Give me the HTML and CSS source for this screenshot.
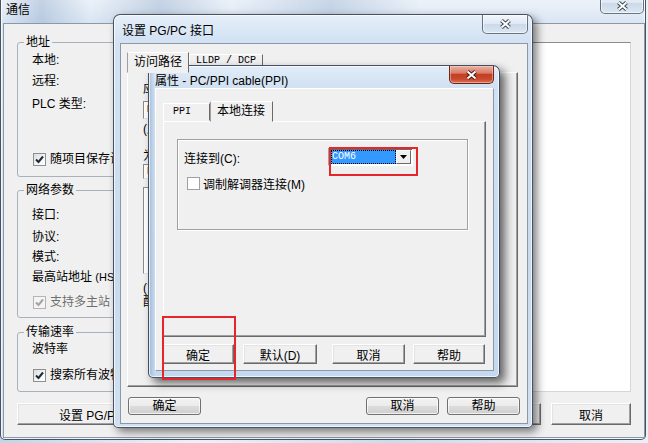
FILE: index.html
```html
<!DOCTYPE html>
<html>
<head lang="zh">
    <meta charset="UTF-8">
    <title>通信</title>
    <link rel="stylesheet" href="styles.css">
</head>
<body>

<!-- 最后面的 通信 窗口 -->
<div class="win win-back">
    <div class="titlebar">
        <span class="title">通信</span>
        <span class="close">
            <svg width="13" height="10" viewBox="0 0 13 10"><path d="M2.5 1.5L10.5 8.5M10.5 1.5L2.5 8.5" stroke="#3c4653" stroke-width="4"/><path d="M2.5 1.5L10.5 8.5M10.5 1.5L2.5 8.5" stroke="#fff" stroke-width="2"/></svg>
        </span>
    </div>
    <div class="client back-client">
        <div class="back-main">
            <div class="back-left">
                <fieldset class="grp grp-addr">
                    <legend>地址</legend>
                    <div class="line m4">本地:</div>
                    <div class="line m7">远程:</div>
                    <div class="line m9">PLC 类型:</div>
                    <div class="line chk m41"><span class="box"><svg width="11" height="11" viewBox="0 0 11 11"><path d="M2 5.5L4.5 8L9 2.5" fill="none" stroke="#1d2a3a" stroke-width="2"/></svg></span>随项目保存设置</div>
                </fieldset>
                <fieldset class="grp grp-net">
                    <legend>网络参数</legend>
                    <div class="line m11">接口:</div>
                    <div class="line m8">协议:</div>
                    <div class="line m6">模式:</div>
                    <div class="line m6">最高站地址 <small>(HSA)</small>:</div>
                    <div class="line chk off m11"><span class="box"><svg width="11" height="11" viewBox="0 0 11 11"><path d="M2 5.5L4.5 8L9 2.5" fill="none" stroke="#a3a3a3" stroke-width="2"/></svg></span>支持多主站</div>
                </fieldset>
                <fieldset class="grp grp-rate">
                    <legend>传输速率</legend>
                    <div class="line m3">波特率</div>
                    <div class="line chk m12"><span class="box"><svg width="11" height="11" viewBox="0 0 11 11"><path d="M2 5.5L4.5 8L9 2.5" fill="none" stroke="#1d2a3a" stroke-width="2"/></svg></span>搜索所有波特率</div>
                </fieldset>
            </div>
            <div class="white-panel"></div>
        </div>
        <div class="back-buttons">
            <button class="cbtn btn-setpg">设置 PG/PC 接口</button>
            <button class="cbtn btn-back-ok">确定</button>
            <button class="cbtn btn-back-cancel">取消</button>
        </div>
    </div>
</div>

<!-- 中间的 设置 PG/PC 接口 -->
<div class="win win-mid">
    <div class="titlebar">
        <span class="title">设置 PG/PC 接口</span>
        <span class="close">
            <svg width="13" height="10" viewBox="0 0 13 10"><path d="M2.5 1.5L10.5 8.5M10.5 1.5L2.5 8.5" stroke="#3c4653" stroke-width="4"/><path d="M2.5 1.5L10.5 8.5M10.5 1.5L2.5 8.5" stroke="#fff" stroke-width="2"/></svg>
        </span>
    </div>
    <div class="client mid-client">
        <div class="tabs">
            <span class="tab sel">访问路径</span>
            <span class="tab mono">LLDP / DCP</span>
        </div>
        <div class="tabpage mid-page">
            <div class="mline">应用程序访问点(A):</div>
            <div class="mbox mcombo">Micro/WIN --&gt; PC/PPI cable(PPI)</div>
            <div class="mline m3">(用于 STEP 7-Micro/WIN 的标准)</div>
            <div class="mline m13">为使用的接口分配参数(P):</div>
            <div class="mbox mtext">PC/PPI cable(PPI)</div>
            <div class="mbox mlist"></div>
            <div class="mline m7">(为 PPI 网络中的 PC/PPI 电缆</div>
            <div class="mline">配置接口参数)</div>
        </div>
        <div class="mid-buttons">
            <button class="wbtn mid-ok">确定</button>
            <button class="wbtn">取消</button>
            <button class="wbtn">帮助</button>
        </div>
    </div>
</div>

<!-- 最前面的 属性 对话框 -->
<div class="win win-front">
    <div class="titlebar">
        <span class="title">属性 - PC/PPI cable(PPI)</span>
        <span class="close red">
            <svg width="13" height="10" viewBox="0 0 13 10"><path d="M2.5 1.5L10.5 8.5M10.5 1.5L2.5 8.5" stroke="#4a1a12" stroke-width="4"/><path d="M2.5 1.5L10.5 8.5M10.5 1.5L2.5 8.5" stroke="#fff" stroke-width="2"/></svg>
        </span>
    </div>
    <div class="client front-client">
        <div class="tabs front-tabs">
            <span class="tab mono ppi">PPI</span>
            <span class="tab sel local">本地连接</span>
        </div>
        <div class="tabpage front-page">
            <div class="etched">
                <div class="conn-row">
                    <span class="conn-label">连接到(C):</span>
                    <span class="combo">
                        <span class="combo-val">COM6</span>
                        <span class="combo-btn"><svg width="7" height="4" viewBox="0 0 7 4"><path d="M0 0H7L3.5 4Z" fill="#000"/></svg></span>
                    </span>
                </div>
                <div class="modem-row">
                    <span class="box plain"></span>调制解调器连接(M)
                </div>
            </div>
        </div>
        <div class="front-buttons">
            <button class="cbtn f-ok">确定</button>
            <button class="cbtn f-def">默认(D)</button>
            <button class="cbtn f-cancel">取消</button>
            <button class="cbtn f-help">帮助</button>
        </div>
    </div>
</div>

<!-- 红框标记 -->
<div class="mark mark-com"></div>
<div class="mark mark-ok"></div>

</body>
</html>
```

FILE: styles.css
```css
*{
    margin:0;
    padding:0;
    box-sizing:border-box;
}
body{
    position:relative;
    width:648px;
    height:443px;
    overflow:hidden;
    font:12px "Liberation Sans","Noto Sans CJK SC",sans-serif;
    color:#000;
    background:linear-gradient(90deg,#c3d4e8 0%,#eef3f9 30%,#cddcec 60%,#e9f0f7 100%);
}
button{
    font:inherit;
    color:#000;
}

/* 窗口外框 (Aero) */
.win{
    position:absolute;
    display:flex;
    flex-direction:column;
    border:1px solid rgba(35,45,62,.8);
    border-radius:7px 7px 5px 5px;
    background:linear-gradient(180deg,#e6eff9 0px,#d3e3f3 24px,#c7daee 60%,#d0e0f1 100%);
    box-shadow:inset 0 0 0 1px rgba(255,255,255,.7);
}
.titlebar{
    display:flex;
    align-items:flex-start;
    flex:none;
}
.title{
    line-height:14px;
    white-space:nowrap;
}
.close{
    display:flex;
    align-items:center;
    justify-content:center;
    margin-left:auto;
    border:1px solid rgba(60,72,90,.75);
    border-top:none;
    border-radius:0 0 5px 5px;
    background:linear-gradient(180deg,#f3f7fc 0%,#dfe8f3 48%,#cbd9e9 52%,#dbe6f2 100%);
    box-shadow:inset 0 0 0 1px rgba(255,255,255,.6);
}
.close.red{
    border-color:#6e2418;
    background:linear-gradient(180deg,#eab3a5 0%,#da7a63 42%,#c33e22 50%,#c94a2f 78%,#dd7556 100%);
    box-shadow:inset 0 0 0 1px rgba(255,220,210,.45);
}
.client{
    flex:1;
    background:#f0f0f0;
    border:1px solid #8a98a9;
}

/* 通信 */
.win-back{
    left:0;
    top:-8px;
    width:646px;
    height:448px;
    padding:0 0 1px 2px;
    background:
        linear-gradient(90deg,rgba(120,150,190,0) 0px,rgba(120,150,190,.35) 40px,rgba(255,255,255,0) 90px,rgba(110,140,180,.3) 160px,rgba(255,255,255,0) 230px,rgba(120,150,190,.3) 330px,rgba(255,255,255,0) 420px),
        linear-gradient(180deg,#f2f6fb 0px,#dae6f3 30px,#d2e1f1 100%);
}
.win-back .titlebar{
    height:30px;
}
.win-back .title{
    margin:10px 0 0 3px;
}
.win-back .close{
    width:44px;
    height:21px;
    margin-right:1px;
    padding-top:6px;
}
.back-client{
    display:flex;
    flex-direction:column;
    padding:11px 13px 0 13px;
}
.back-main{
    display:flex;
}
.back-left{
    width:230px;
    flex:none;
}
.grp{
    margin:0;
    padding:0;
    min-width:0;
    border:1px solid #a9b1ba;
    border-radius:3px;
}
.grp legend{
    margin-left:6px;
    padding:0 2px;
    line-height:14px;
}
.grp-net{
    margin-top:6px;
    padding-bottom:8px;
}
.grp-addr{
    padding-bottom:10px;
}
.grp-rate{
    margin-top:7px;
    padding-bottom:9px;
}
.line{
    height:14px;
    line-height:14px;
    margin-left:14px;
    white-space:nowrap;
}
.line small{
    font-size:11px;
}
.m3{margin-top:3px;}
.m4{margin-top:4px;}
.m6{margin-top:6px;}
.m7{margin-top:7px;}
.m8{margin-top:8px;}
.m9{margin-top:9px;}
.m11{margin-top:11px;}
.m12{margin-top:12px;}
.m13{margin-top:13px;}
.m41{margin-top:41px;}
.chk{
    display:flex;
    align-items:center;
    gap:4px;
    margin-left:15px;
}
.chk.off{
    color:#6d6d6d;
}
.box{
    display:flex;
    align-items:center;
    justify-content:center;
    width:13px;
    height:13px;
    flex:none;
    border:1px solid #8e8f8f;
    background:linear-gradient(135deg,#dcdcdc 0%,#f6f6f6 60%,#fff 100%);
}
.chk.off .box{
    border-color:#b5b5b5;
    background:#f4f4f4;
}
.white-panel{
    flex:1;
    height:350px;
    margin:7px 0 0 20px;
    background:#fff;
    border:1px solid;
    border-color:#8c8c8c #d6d6d6 #d6d6d6 #8c8c8c;
}
.back-buttons{
    display:flex;
    height:22px;
    margin-top:11px;
}
.cbtn{
    height:100%;
    background:#f0f0f0;
    border:1px solid;
    border-color:#fff #6a6a6a #6a6a6a #fff;
    box-shadow:inset -1px -1px 0 #a0a0a0,inset 1px 1px 0 #e3e3e3;
}
.btn-setpg{
    width:176px;
}
.btn-back-ok{
    width:81px;
    margin-left:auto;
}
.btn-back-cancel{
    width:80px;
    margin-left:10px;
}

/* 设置 PG/PC 接口 */
.win-mid{
    left:113px;
    top:14px;
    width:420px;
    height:414px;
    padding:0 4px 4px 6px;
    box-shadow:inset 0 0 0 1px rgba(255,255,255,.7),4px 4px 9px rgba(0,0,0,.5);
}
.win-mid .titlebar{
    height:28px;
}
.win-mid .title{
    margin:9px 0 0 2px;
}
.win-mid .close{
    width:46px;
    height:19px;
    margin-right:0;
}
.mid-client{
    display:flex;
    flex-direction:column;
    padding:8px 7px 8px 6px;
}
.tabs{
    display:flex;
    align-items:flex-end;
    height:20px;
}
.tab{
    position:relative;
    height:18px;
    line-height:17px;
    padding:0 6px;
    background:#f0f0f0;
    border:1px solid;
    border-color:#fff #6a6a6a #f0f0f0 #fff;
    white-space:nowrap;
}
.tab.sel{
    z-index:1;
    height:21px;
    margin-bottom:-1px;
    line-height:19px;
    border-color:#fff #6a6a6a #f0f0f0 #a0a0a0;
}
.mono{
    font:10px "Liberation Mono","DejaVu Sans Mono",monospace;
}
.tabpage{
    border:1px solid;
    border-color:#fff #6a6a6a #6a6a6a #fff;
    box-shadow:inset -1px -1px 0 #a0a0a0;
}
.mid-page{
    width:391px;
    height:315px;
    padding:9px 0 0 15px;
}
.mline{
    line-height:14px;
    white-space:nowrap;
}
.mbox{
    background:#fff;
    border:1px solid;
    border-color:#8c8c8c #e3e3e3 #e3e3e3 #8c8c8c;
    font:10px "Liberation Mono",monospace;
    line-height:16px;
    padding-left:3px;
}
.mcombo{
    width:300px;
    height:18px;
    margin-top:5px;
}
.mtext{
    width:260px;
    height:15px;
    line-height:13px;
    margin-top:1px;
}
.mlist{
    width:260px;
    height:87px;
    margin-top:8px;
}
.mid-buttons{
    display:flex;
    height:18px;
    margin-top:10px;
    gap:8px;
}
.wbtn{
    width:73px;
    height:18px;
    line-height:14px;
    border:1px solid #707070;
    border-radius:3px;
    background:linear-gradient(180deg,#f3f3f3 0%,#ebebeb 48%,#dcdcdc 52%,#cfcfcf 100%);
    box-shadow:inset 0 0 0 1px rgba(255,255,255,.7);
}
.mid-ok{
    margin:0 auto 0 1px;
}

/* 属性 - PC/PPI cable(PPI) */
.win-front{
    left:148px;
    top:65px;
    width:352px;
    height:313px;
    padding:0 5px 6px 6px;
    background:
        linear-gradient(90deg,rgba(90,125,170,.35) 0px,rgba(255,255,255,0) 6px),
        linear-gradient(180deg,#e1ecf8 0px,#d0e1f2 22px,#c5d9ee 100%);
    box-shadow:inset 0 0 0 1px rgba(255,255,255,.7),5px 5px 10px rgba(0,0,0,.6);
}
.win-front .titlebar{
    height:22px;
}
.win-front .title{
    margin:8px 0 0 0;
}
.win-front .close{
    width:45px;
    height:18px;
}
.front-client{
    display:flex;
    flex-direction:column;
    padding:11px 0 0 6px;
    border-color:#fff #8a98a9 #8a98a9 #fff;
}
.front-tabs{
    height:21px;
    padding-left:1px;
}
.tab.ppi{
    width:47px;
    padding-left:9px;
    line-height:16px;
}
.tab.local{
    width:63px;
    padding-left:6px;
}
.front-page{
    width:323px;
    height:216px;
    margin-left:1px;
    padding:17px 0 0 13px;
}
.etched{
    width:291px;
    height:91px;
    border:1px solid #a0a0a0;
    box-shadow:1px 1px 0 #fff,inset 1px 1px 0 #fff;
    padding:8px 0 0 6px;
}
.conn-row{
    display:flex;
    align-items:center;
    height:18px;
}
.conn-label{
    width:144px;
    flex:none;
}
.combo{
    display:flex;
    width:85px;
    height:18px;
    background:#fff;
    border:1px solid;
    border-color:#a0a0a0 #fff #fff #a0a0a0;
    box-shadow:inset 1px 1px 0 #696969;
    padding:1px 1px 1px 2px;
}
.combo-val{
    flex:1;
    background:#3399ff;
    color:#fff;
    outline:1px dotted #000;
    outline-offset:-1px;
    font:10px "Liberation Mono",monospace;
    line-height:14px;
    padding-left:1px;
}
.combo-btn{
    display:flex;
    align-items:center;
    justify-content:center;
    width:15px;
    background:#f0f0f0;
    border:1px solid;
    border-color:#fff #6a6a6a #6a6a6a #fff;
}
.modem-row{
    display:flex;
    align-items:center;
    gap:3px;
    height:14px;
    margin:10px 0 0 3px;
}
.box.plain{
    background:#fff;
    border-color:#a0a0a0;
}
.front-buttons{
    display:flex;
    height:20px;
    margin-top:7px;
}
.f-ok{
    width:72px;
    margin-left:0;
}
.f-def{
    width:74px;
    margin-left:9px;
}
.f-cancel{
    width:73px;
    margin-left:15px;
}
.f-help{
    width:72px;
    margin-left:8px;
}

/* 红框 */
.mark{
    position:absolute;
    border:2px solid #e5262a;
}
.mark-com{
    left:329px;
    top:147px;
    width:89px;
    height:29px;
}
.mark-ok{
    left:162px;
    top:316px;
    width:74px;
    height:64px;
}
```
